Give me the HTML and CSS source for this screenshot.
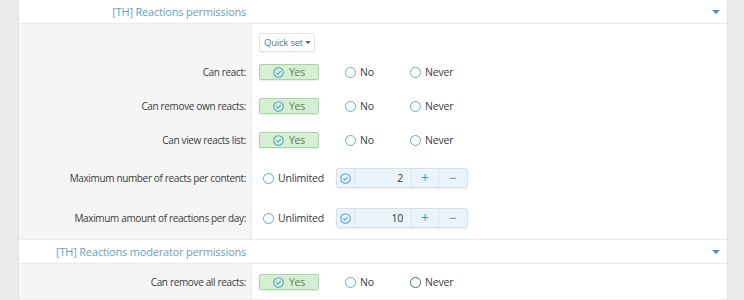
FILE: index.html
```html
<!DOCTYPE html>
<html>
<head>
<meta charset="utf-8">
<link rel="stylesheet" href="styles.css">
</head>
<body>
<div class="page">
  <div class="block">
    <div class="head">
      <div class="head-title">[TH] Reactions permissions</div>
      <div class="head-arrow"></div>
    </div>
    <div class="body">
      <div class="row qs-row">
        <div class="lbl"></div>
        <div class="ctl"><button class="quick">Quick set<span class="caret"></span></button></div>
      </div>
      <div class="row">
        <div class="lbl">Can react:</div>
        <div class="ctl">
          <span class="yes"><svg class="chk" viewBox="0 0 12 12"><circle cx="6" cy="6" r="5.2"/><path d="M3.6 6.2 L5.3 7.8 L8.4 4.5"/></svg>Yes</span>
          <span class="radio no"><i></i>No</span>
          <span class="radio"><i></i>Never</span>
        </div>
      </div>
      <div class="row">
        <div class="lbl">Can remove own reacts:</div>
        <div class="ctl">
          <span class="yes"><svg class="chk" viewBox="0 0 12 12"><circle cx="6" cy="6" r="5.2"/><path d="M3.6 6.2 L5.3 7.8 L8.4 4.5"/></svg>Yes</span>
          <span class="radio no"><i></i>No</span>
          <span class="radio"><i></i>Never</span>
        </div>
      </div>
      <div class="row">
        <div class="lbl">Can view reacts list:</div>
        <div class="ctl">
          <span class="yes"><svg class="chk" viewBox="0 0 12 12"><circle cx="6" cy="6" r="5.2"/><path d="M3.6 6.2 L5.3 7.8 L8.4 4.5"/></svg>Yes</span>
          <span class="radio no"><i></i>No</span>
          <span class="radio"><i></i>Never</span>
        </div>
      </div>
      <div class="row spin-row">
        <div class="lbl">Maximum number of reacts per content:</div>
        <div class="ctl">
          <span class="radio unl"><i></i>Unlimited</span>
          <span class="spin">
            <span class="s-chk"><svg class="chk" viewBox="0 0 12 12"><circle cx="6" cy="6" r="5.2"/><path d="M3.6 6.2 L5.3 7.8 L8.4 4.5"/></svg></span>
            <span class="s-val">2</span>
            <span class="s-btn plus">+</span>
            <span class="s-btn minus">−</span>
          </span>
        </div>
      </div>
      <div class="row spin-row">
        <div class="lbl">Maximum amount of reactions per day:</div>
        <div class="ctl">
          <span class="radio unl"><i></i>Unlimited</span>
          <span class="spin">
            <span class="s-chk"><svg class="chk" viewBox="0 0 12 12"><circle cx="6" cy="6" r="5.2"/><path d="M3.6 6.2 L5.3 7.8 L8.4 4.5"/></svg></span>
            <span class="s-val">10</span>
            <span class="s-btn plus">+</span>
            <span class="s-btn minus">−</span>
          </span>
        </div>
      </div>
    </div>
    <div class="head">
      <div class="head-title">[TH] Reactions moderator permissions</div>
      <div class="head-arrow"></div>
    </div>
    <div class="body body2">
      <div class="row">
        <div class="lbl">Can remove all reacts:</div>
        <div class="ctl">
          <span class="yes"><svg class="chk" viewBox="0 0 12 12"><circle cx="6" cy="6" r="5.2"/><path d="M3.6 6.2 L5.3 7.8 L8.4 4.5"/></svg>Yes</span>
          <span class="radio no"><i></i>No</span>
          <span class="radio dark"><i></i>Never</span>
        </div>
      </div>
    </div>
  </div>
</div>
</body>
</html>
```
FILE: styles.css
```css
* { box-sizing: border-box; }
html, body { margin: 0; padding: 0; }
body {
  background: #ebebeb;
  font-family: "Open Sans", "Noto Sans", sans-serif;
  font-size: 10px;
  letter-spacing: -0.2px;
  color: #3a3a3a;
  width: 744px;
  height: 300px;
  overflow: hidden;
}
.page {
  padding: 0 16px 0 18px;
}
.block {
  background: #fff;
  width: 710px;
  border-left: 1px solid #e2e2e2;
  border-right: 1px solid #e2e2e2;
}
.head {
  display: flex;
  align-items: center;
  height: 24px;
  border-bottom: 1px solid #ececec;
  background: #fff;
}
.head-title {
  width: 233px;
  padding-right: 6px;
  text-align: right;
  color: #64a3c8;
  font-size: 11px;
  letter-spacing: -0.2px;
  white-space: nowrap;
}
.head-arrow {
  margin-left: auto;
  margin-right: 7px;
  width: 0; height: 0;
  border-left: 4px solid transparent;
  border-right: 4px solid transparent;
  border-top: 4px solid #4a8fc4;
}
.body {
  display: flex;
  flex-direction: column;
  gap: 18px;
  padding: 9px 0 11px;
  background: linear-gradient(to right, #f5f5f5 0, #f5f5f5 232px, #ebebeb 232px, #ebebeb 233px, #fff 233px);
  border-bottom: 1px solid #ececec;
}
.body2 { padding: 10px 0 9px; }
.row { display: flex; align-items: center; }
.qs-row { margin-bottom: -6px; }
.spin-row { margin-top: 2px; }
.lbl {
  width: 233px;
  padding-right: 6px;
  text-align: right;
  white-space: nowrap;
  color: #3a3a3a;
  letter-spacing: -0.35px;
}
.ctl {
  display: flex;
  align-items: center;
  padding-left: 7px;
}
.quick {
  font: inherit;
  font-size: 9.5px;
  letter-spacing: -0.2px;
  color: #5a7688;
  background: #fff;
  border: 1px solid #e3e3e3;
  border-radius: 2px;
  height: 19px;
  width: 56px;
  padding: 0 0 0 1px;
  display: flex;
  align-items: center;
  justify-content: center;
  box-shadow: 0 1px 1px rgba(0,0,0,0.04);
}
.caret {
  display: inline-block;
  margin-left: 2px;
  border-left: 3px solid transparent;
  border-right: 3px solid transparent;
  border-top: 3px solid #4d6b80;
  margin-top: -1px;
}
.yes {
  display: flex;
  align-items: center;
  justify-content: center;
  width: 60px;
  height: 16px;
  background: #d5efd3;
  border: 1px solid #a8d6a3;
  border-radius: 2px;
  color: #607d60;
  box-shadow: 0 1px 1px rgba(0,0,0,0.08);
  font-size: 10.5px;
}
.chk {
  width: 11px; height: 11px;
  margin-right: 5px;
  fill: none;
  stroke: #4a9fd1;
  stroke-width: 1.1;
}
.radio {
  display: flex;
  align-items: center;
  color: #3a3a3a;
  font-size: 10.5px;
}
.radio i {
  display: inline-block;
  width: 11px; height: 11px;
  border: 1px solid #6fa6c7;
  border-radius: 50%;
  margin-right: 4px;
  background: #fff;
}
.radio.dark i { border-color: #486a7e; border-width: 1.3px; }
.no { margin-left: 26px; width: 65px; }
.unl { margin-left: 4px; width: 73px; }
.spin {
  display: flex;
  align-items: stretch;
  height: 20px;
  width: 132px;
  background: #eaf4fb;
  border: 1px solid #d3e3ee;
  border-radius: 3px;
  box-shadow: 0 1px 2px rgba(0,0,0,0.08);
}
.s-chk {
  width: 18px;
  display: flex; align-items: center; justify-content: center;
  border-right: 1px solid #dbe7ef;
}
.s-chk .chk { margin: 0; }
.s-val {
  width: 56px;
  text-align: right;
  padding-right: 8px;
  line-height: 18px;
  color: #333;
  font-size: 10.5px;
}
.s-btn {
  display: flex; align-items: center; justify-content: center;
  border-left: 1px solid #dbe7ef;
  color: #4a8fc4;
  font-size: 14px;
  line-height: 1;
}
.plus { width: 27px; }
.minus { flex: 1; color: #6b8fa8; }
```
